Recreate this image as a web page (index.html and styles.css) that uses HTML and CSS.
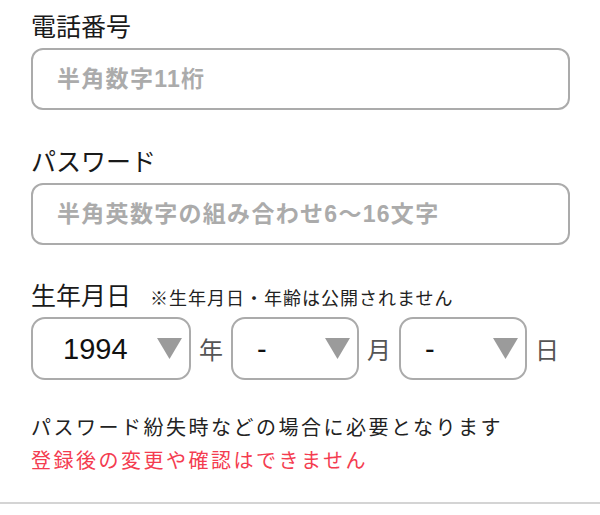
FILE: index.html
```html
<!DOCTYPE html>
<html lang="ja">
<head>
<meta charset="utf-8">
<title>登録</title>
<link rel="stylesheet" href="styles.css">
</head>
<body>
<div class="form">
  <div class="field">
    <div class="label">電話番号</div>
    <div class="input"><span class="placeholder">半角数字11桁</span></div>
  </div>
  <div class="field">
    <div class="label">パスワード</div>
    <div class="input"><span class="placeholder">半角英数字の組み合わせ6〜16文字</span></div>
  </div>
  <div class="field field-birth">
    <div class="label">生年月日<span class="note">※生年月日・年齢は公開されません</span></div>
    <div class="date-row">
      <div class="select select-year">
        <span class="select-value">1994</span>
        <svg class="arrow" width="25" height="21" viewBox="0 0 25 21"><polygon points="0,0 25,0 12.5,21" fill="#9b9b9b"/></svg>
      </div>
      <span class="unit">年</span>
      <div class="select select-small">
        <span class="select-value">-</span>
        <svg class="arrow" width="25" height="21" viewBox="0 0 25 21"><polygon points="0,0 25,0 12.5,21" fill="#9b9b9b"/></svg>
      </div>
      <span class="unit">月</span>
      <div class="select select-small">
        <span class="select-value">-</span>
        <svg class="arrow" width="25" height="21" viewBox="0 0 25 21"><polygon points="0,0 25,0 12.5,21" fill="#9b9b9b"/></svg>
      </div>
      <span class="unit">日</span>
    </div>
    <div class="notes">
      <p class="hint">パスワード紛失時などの場合に必要となります</p>
      <p class="warning">登録後の変更や確認はできません</p>
    </div>
  </div>
</div>
<div class="rule"></div>
</body>
</html>
```
FILE: styles.css
```css
html, body {
  margin: 0;
  padding: 0;
  background: #ffffff;
}

body {
  font-family: "Noto Sans CJK JP", "Noto Sans", sans-serif;
  color: #1a1a1a;
  width: 600px;
  height: 515px;
  overflow: hidden;
}

.form {
  padding: 7px 30px 0 31px;
}

.field + .field {
  margin-top: 32px;
}

.field.field-birth {
  margin-top: 31px;
}

.label {
  font-size: 25px;
  line-height: 36px;
  height: 36px;
  white-space: nowrap;
  color: #1a1a1a;
}

.note {
  font-size: 18px;
  letter-spacing: 1px;
  margin-left: 19px;
  color: #222222;
}

.input {
  box-sizing: border-box;
  margin-top: 5px;
  height: 62px;
  border: 2px solid #ababab;
  border-radius: 12px;
  display: flex;
  align-items: center;
  padding-left: 24px;
}

.placeholder {
  font-family: "Liberation Sans", "Noto Sans CJK JP", sans-serif;
  font-weight: bold;
  font-size: 23px;
  letter-spacing: 1.3px;
  color: #ababab;
  line-height: 30px;
}

.date-row {
  margin-top: 5px;
  display: flex;
  align-items: center;
}

.select {
  box-sizing: border-box;
  height: 63px;
  border: 2px solid #ababab;
  border-radius: 14px;
  display: flex;
  align-items: center;
  justify-content: space-between;
  padding: 0 7px 0 24px;
}

.select-year {
  width: 160px;
  padding-left: 30px;
}

.select-small {
  width: 128px;
}

.select-value {
  font-family: "Liberation Sans", Arial, sans-serif;
  font-size: 29px;
  line-height: 34px;
  color: #111111;
}

.arrow {
  display: block;
}

.unit {
  width: 24px;
  margin: 0 8px;
  font-size: 24px;
  line-height: 34px;
  color: #555555;
  text-align: center;
}

.notes {
  margin-top: 30px;
}

.notes p {
  margin: 0;
  font-size: 20px;
  letter-spacing: 2.5px;
  line-height: 33px;
  white-space: nowrap;
}

.hint {
  color: #222222;
}

.warning {
  color: #f43c50;
}

.rule {
  margin-top: 26px;
  height: 2px;
  background: #d4d4d4;
}
```
